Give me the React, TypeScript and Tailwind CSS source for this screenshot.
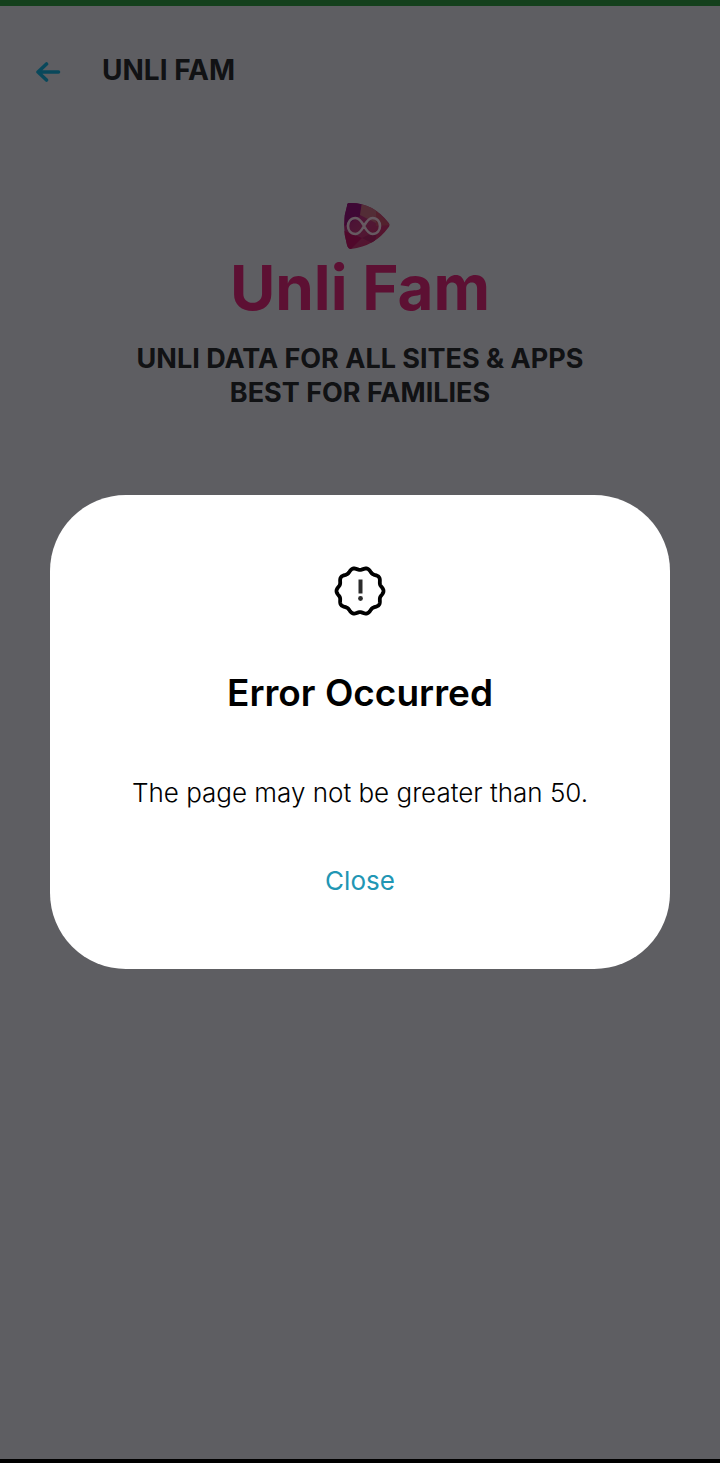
import { useState } from "react";

function ArrowLeftIcon() {
  return (
    <svg viewBox="0 0 26 22" className="h-[22px] w-[26px]" fill="none" aria-hidden="true">
      <path
        d="M10.5 3 L2 11 L10.5 19 M2 11 H22.5"
        stroke="#18b4e4"
        strokeWidth="3.6"
        strokeLinecap="round"
        strokeLinejoin="round"
      />
    </svg>
  );
}

function UnliLogo() {
  return (
    <svg viewBox="0 0 48 48" className="h-12 w-12" fill="none" aria-hidden="true">
      <defs>
        <linearGradient id="logoFill" x1="0" y1="0" x2="1" y2="1">
          <stop offset="0" stopColor="#b0188a" />
          <stop offset="0.5" stopColor="#c83c82" />
          <stop offset="1" stopColor="#e02864" />
        </linearGradient>
        <clipPath id="logoShape">
          <path d="M7 1 Q30 0 46 20 Q49 23 46 26 Q33 44 9 47 Q6 47 5 43 Q-1 22 5 4 Q5 1 7 1 Z" />
        </clipPath>
      </defs>
      <g clipPath="url(#logoShape)">
        <rect width="48" height="48" fill="url(#logoFill)" />
        <path d="M0 0 H20 L18 14 L3 24 Z" fill="#9c1484" />
        <path d="M20 0 H36 V22 L18 13 Z" fill="#d07088" />
        <path d="M34 8 L48 23 L34 24 Z" fill="#d05472" />
        <path d="M0 28 L20 36 L8 48 H0 Z" fill="#c8146c" />
        <path d="M20 36 L36 28 L32 42 Z" fill="#b82870" />
      </g>
      <path
        d="M22 24 C19 18.5 17 16 13.5 16 C3.5 16 3.5 32 13.5 32 C17 32 19 29.5 22 24 C25 18.5 27 16 30.5 16 C40.5 16 40.5 32 30.5 32 C27 32 25 29.5 22 24 Z"
        stroke="#ffe0f2"
        strokeWidth="2.6"
      />
    </svg>
  );
}

// Ten-lobed seal outline around the exclamation mark
const sealPoints = Array.from({ length: 180 }, (_, i) => {
  const angle = (i * Math.PI) / 90;
  const radius = 22.3 + 1.2 * Math.cos(10 * angle);
  return `${(26 + radius * Math.cos(angle)).toFixed(2)},${(26 + radius * Math.sin(angle)).toFixed(2)}`;
}).join(" ");

function ErrorIcon() {
  return (
    <svg viewBox="0 0 52 52" className="h-[52px] w-[52px]" fill="none" aria-hidden="true">
      <polygon points={sealPoints} stroke="#000" strokeWidth="3.8" strokeLinejoin="round" />
      <path d="M26.5 14.5 V28.5" stroke="#2b2b2b" strokeWidth="4" />
      <circle cx="26.5" cy="33.5" r="2.4" fill="#2b2b2b" />
    </svg>
  );
}

function ErrorDialog({ onClose }: { onClose: () => void }) {
  return (
    <div className="fixed inset-0 flex items-center justify-center bg-black/60 px-[50px]">
      <div
        role="alertdialog"
        aria-modal="true"
        aria-labelledby="error-title"
        aria-describedby="error-message"
        className="flex w-full flex-col items-center rounded-[76px] bg-white px-8 pt-[70px] pb-[72px] text-center"
      >
        <ErrorIcon />
        <h2 id="error-title" className="mt-14 text-[37px] leading-10 font-semibold text-black">
          Error Occurred
        </h2>
        <p id="error-message" className="mt-16 text-[26px] leading-8 font-light text-black">
          The page may not be greater than 50.
        </p>
        <button type="button" onClick={onClose} className="mt-14 text-[26px] leading-8 text-[#2196b4]">
          Close
        </button>
      </div>
    </div>
  );
}

export default function App() {
  const [open, setOpen] = useState(true);

  return (
    <div className="flex min-h-screen flex-col border-t-[6px] border-b-4 border-t-[#32a046] border-b-black bg-[#ebebf5] font-['Inter',sans-serif] text-[#2c2d32]">
      <header className="flex items-center gap-10 px-9 pt-11">
        <button type="button" aria-label="Back" className="pt-1">
          <ArrowLeftIcon />
        </button>
        <h1 className="text-[28px] leading-10 font-bold">UNLI FAM</h1>
      </header>

      <main className="flex flex-col items-center px-8 pt-28 text-center">
        <div className="pl-3">
          <UnliLogo />
        </div>
        <p className="text-[62px] leading-[76px] font-bold text-[#e82a80]">Unli Fam</p>
        <p className="mt-4 text-[27px] leading-[34px] font-bold">
          UNLI DATA FOR ALL SITES &amp; APPS
          <br />
          BEST FOR FAMILIES
        </p>
      </main>

      {open && <ErrorDialog onClose={() => setOpen(false)} />}
    </div>
  );
}
